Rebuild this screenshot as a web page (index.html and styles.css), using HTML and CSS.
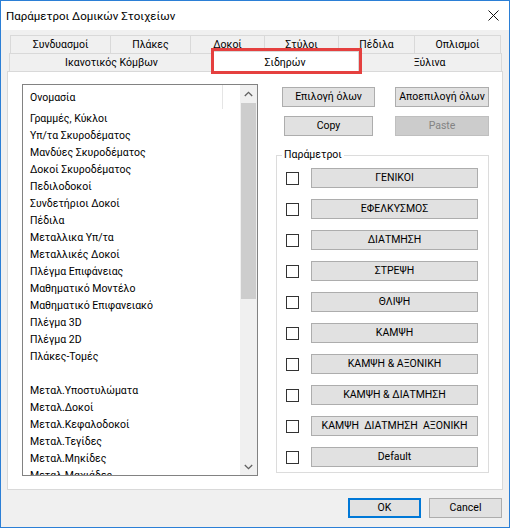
FILE: index.html
```html
<!DOCTYPE html>
<html>
<head>
<meta charset="utf-8">
<title>Παράμετροι Δομικών Στοιχείων</title>
<link rel="stylesheet" href="styles.css">
</head>
<body>
<div class="window">
  <div class="titlebar">
    <span class="title">Παράμετροι Δομικών Στοιχείων</span>
    <svg class="close" width="11" height="11" viewBox="0 0 11 11"><path d="M0.5 0.5L10.5 10.5M10.5 0.5L0.5 10.5" stroke="#111" stroke-width="1"/></svg>
  </div>
  <div class="content">
    <div class="tabrow row1">
      <div class="tab t1">Συνδυασμοί</div>
      <div class="tab t2">Πλάκες</div>
      <div class="tab t3">Δοκοί</div>
      <div class="tab t4">Στύλοι</div>
      <div class="tab t5">Πέδιλα</div>
      <div class="tab t6 last">Οπλισμοί</div>
    </div>
    <div class="tabrow row2">
      <div class="tab t7">Ικανοτικός Κόμβων</div>
      <div class="tab sel">Σιδηρών<span class="mark"></span></div>
      <div class="tab t9 last">Ξύλινα</div>
    </div>
    <div class="panel">
      <div class="list">
        <div class="list-main">
          <div class="list-header"><span class="col">Ονομασία</span></div>
          <div class="items">
            <div>Γραμμές, Κύκλοι</div>
            <div>Υπ/τα Σκυροδέματος</div>
            <div>Μανδύες Σκυροδέματος</div>
            <div>Δοκοί Σκυροδέματος</div>
            <div>Πεδιλοδοκοί</div>
            <div>Συνδετήριοι Δοκοί</div>
            <div>Πέδιλα</div>
            <div>Μεταλλικα Υπ/τα</div>
            <div>Μεταλλικές Δοκοί</div>
            <div>Πλέγμα Επιφάνειας</div>
            <div>Μαθηματικό Μοντέλο</div>
            <div>Μαθηματικό Επιφανειακό</div>
            <div>Πλέγμα 3D</div>
            <div>Πλέγμα 2D</div>
            <div>Πλάκες-Τομές</div>
            <div>&nbsp;</div>
            <div>Μεταλ.Υποστυλώματα</div>
            <div>Μεταλ.Δοκοί</div>
            <div>Μεταλ.Κεφαλοδοκοί</div>
            <div>Μεταλ.Τεγίδες</div>
            <div>Μεταλ.Μηκίδες</div>
            <div>Μεταλ.Μαχιάδες</div>
          </div>
        </div>
        <div class="vscroll">
          <div class="arrow"><svg width="9" height="6" viewBox="0 0 9 6"><polyline points="0.8,5 4.5,1.3 8.2,5" fill="none" stroke="#606060" stroke-width="1.3"/></svg></div>
          <div class="track"><div class="thumb"></div></div>
          <div class="arrow"><svg width="9" height="6" viewBox="0 0 9 6"><polyline points="0.8,1 4.5,4.7 8.2,1" fill="none" stroke="#606060" stroke-width="1.3"/></svg></div>
        </div>
      </div>
      <div class="side">
        <div class="btnrow first">
          <button class="btn b-sel">Επιλογή όλων</button>
          <button class="btn b-unsel">Αποεπιλογή όλων</button>
        </div>
        <div class="btnrow second">
          <button class="btn b-copy">Copy</button>
          <button class="btn b-paste" disabled>Paste</button>
        </div>
        <fieldset class="group">
          <legend>Παράμετροι</legend>
          <div class="prow"><span class="cb"></span><button class="btn pbtn">ΓΕΝΙΚΟΙ</button></div>
          <div class="prow"><span class="cb"></span><button class="btn pbtn">ΕΦΕΛΚΥΣΜΟΣ</button></div>
          <div class="prow"><span class="cb"></span><button class="btn pbtn">ΔΙΑΤΜΗΣΗ</button></div>
          <div class="prow"><span class="cb"></span><button class="btn pbtn">ΣΤΡΕΨΗ</button></div>
          <div class="prow"><span class="cb"></span><button class="btn pbtn">ΘΛΙΨΗ</button></div>
          <div class="prow"><span class="cb"></span><button class="btn pbtn">ΚΑΜΨΗ</button></div>
          <div class="prow"><span class="cb"></span><button class="btn pbtn">ΚΑΜΨΗ &amp; ΑΞΟΝΙΚΗ</button></div>
          <div class="prow"><span class="cb"></span><button class="btn pbtn">ΚΑΜΨΗ &amp; ΔΙΑΤΜΗΣΗ</button></div>
          <div class="prow"><span class="cb"></span><button class="btn pbtn pre">ΚΑΜΨΗ  ΔΙΑΤΜΗΣΗ  ΑΞΟΝΙΚΗ</button></div>
          <div class="prow"><span class="cb"></span><button class="btn pbtn">Default</button></div>
        </fieldset>
      </div>
    </div>
    <div class="footer">
      <button class="btn b-ok">OK</button>
      <button class="btn b-cancel">Cancel</button>
    </div>
  </div>
</div>
</body>
</html>
```

FILE: styles.css
```css
* { box-sizing: border-box; }
html, body { margin: 0; padding: 0; }
body {
  font-family: Roboto, "Noto Sans", sans-serif;
  font-size: 10.5px;
  color: #000;
  background: #fff;
}
.window {
  width: 510px;
  height: 528px;
  border: 1px solid #2b7fd6;
  background: #f0f0f0;
  display: flex;
  flex-direction: column;
}
.titlebar {
  height: 29px;
  flex: none;
  background: #fff;
  display: flex;
  align-items: center;
  justify-content: space-between;
  padding-left: 5px;
}
.title { font-size: 11.5px; line-height: 16px; }
.close { margin-right: 10px; }
.content { padding: 5px 6px 0 6px; }

.tabrow { display: flex; height: 18px; }
.row1 { margin-left: 3px; }
.row2 { margin-left: 2px; }
.tab {
  flex: none;
  height: 18px;
  border-top: 1px solid #d9d9d9;
  border-left: 1px solid #d9d9d9;
  background: #f0f0f0;
  text-align: center;
  line-height: 17px;
  white-space: nowrap;
}
.tab.last { border-right: 1px solid #d9d9d9; }
.t1 { width: 100px; }
.t2 { width: 80px; }
.t3 { width: 74px; }
.t4 { width: 74px; }
.t5 { width: 76px; }
.t6 { width: 87px; }
.t7 { width: 204px; }
.t9 { width: 145px; }
.tab.sel {
  position: relative;
  z-index: 2;
  width: 148px;
  height: 21px;
  margin: -2px -2px 0 -2px;
  border-right: 1px solid #d9d9d9;
  background: #fff;
  padding-top: 2px;
}
.mark {
  position: absolute;
  left: -1px;
  top: -4px;
  width: 151px;
  height: 26px;
  border: 3px solid #e5403f;
}

.panel {
  width: 496px;
  height: 419px;
  background: #fff;
  border: 1px solid #d9d9d9;
  display: flex;
  align-items: flex-start;
  padding: 12px 0 0 14px;
}
.list {
  flex: none;
  width: 236px;
  height: 392px;
  border: 1px solid #828282;
  display: flex;
  background: #fff;
}
.list-main { flex: 1; overflow: hidden; }
.list-header { height: 24px; display: flex; }
.col {
  width: 200px;
  height: 24px;
  border-right: 1px solid #e5e5e5;
  padding-left: 7px;
  line-height: 25px;
}
.items { padding: 1px 0 0 7px; line-height: 17px; white-space: nowrap; }

.vscroll {
  flex: none;
  width: 17px;
  background: #f0f0f0;
  display: flex;
  flex-direction: column;
}
.arrow {
  height: 17px;
  flex: none;
  display: flex;
  align-items: center;
  justify-content: center;
}
.track { flex: 1; padding-top: 1px; }
.thumb { height: 196px; margin: 0 1px; background: #cdcdcd; }

.side { flex: none; width: 213px; margin-left: 18px; }
.btnrow { display: flex; }
.btnrow.first { margin-top: 3px; gap: 20px; padding-left: 6px; }
.btnrow.second { margin-top: 9px; gap: 22px; padding-left: 8px; }
.btn {
  height: 20px;
  padding: 0;
  margin: 0;
  background: #e1e1e1;
  border: 1px solid #adadad;
  font-family: inherit;
  font-size: 10.5px;
  line-height: 18px;
  color: #000;
  white-space: nowrap;
}
.b-sel { width: 93px; }
.b-unsel { width: 94px; }
.b-copy { width: 89px; }
.b-paste { width: 94px; background: #cccccc; border-color: #bfbfbf; color: #838383; }

.group {
  margin: 12px 0 0 0;
  width: 213px;
  border: 1px solid #dcdcdc;
  padding: 6px 10px 5px 9px;
  min-width: 0;
}
.group legend {
  padding: 0 2px;
  margin-left: -4px;
  line-height: 14px;
  font-size: 10.5px;
}
.prow { display: flex; align-items: center; height: 20px; }
.prow + .prow { margin-top: 11px; }
.cb {
  flex: none;
  width: 13px;
  height: 13px;
  border: 1px solid #333;
  background: #fff;
  margin-right: 12px;
}
.pbtn { width: 167px; }
.pre { white-space: pre; }

.footer {
  display: flex;
  justify-content: flex-end;
  gap: 8px;
  margin-top: 8px;
  padding-right: 1px;
}
.b-ok { width: 73px; border: 2px solid #0078d7; line-height: 16px; }
.b-cancel { width: 73px; }
```
